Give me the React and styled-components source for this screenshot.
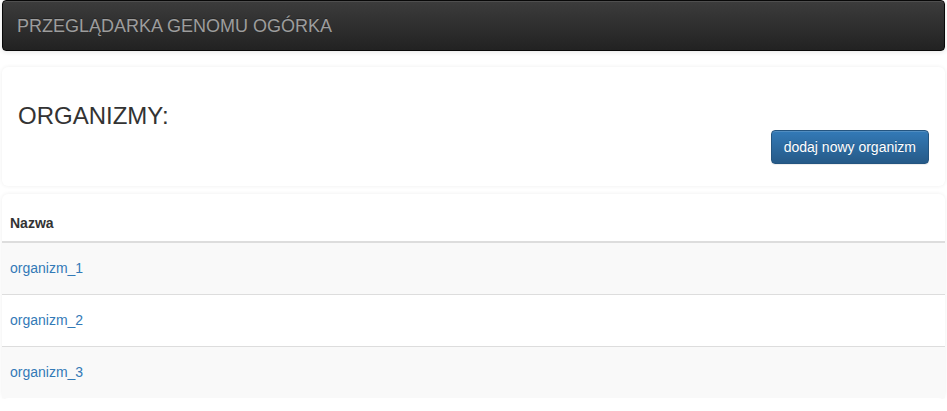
import React from "react";
import styled, { createGlobalStyle } from "styled-components";

const Global = createGlobalStyle`
  html, body { margin: 0; padding: 0; background: #fff; }
  body {
    font-family: "Liberation Sans", Arial, sans-serif;
    font-size: 14px;
    line-height: 20px;
    color: #333;
  }
  * { box-sizing: border-box; }
`;

const Page = styled.div`
  padding: 0 2px;
`;

const Navbar = styled.nav`
  height: 51px;
  display: flex;
  align-items: center;
  background: linear-gradient(to bottom, #3c3c3c 0%, #222 100%);
  border: 1px solid #080808;
  border-radius: 4px;
  box-shadow: inset 0 1px 0 rgba(255, 255, 255, 0.1), 0 1px 5px rgba(0, 0, 0, 0.1);
  margin-bottom: 16px;
`;

const Brand = styled.a`
  padding: 0 14px;
  font-size: 18px;
  line-height: 20px;
  color: #9d9d9d;
  text-decoration: none;
  text-shadow: 0 -1px 0 rgba(0, 0, 0, 0.25);
`;

const Panel = styled.section`
  background: #fff;
  border-radius: 6px;
  box-shadow: 0 0 4px rgba(0, 0, 0, 0.07);
  padding: ${(p) => p.$pad || "0"};
  margin-bottom: ${(p) => p.$mb || "0"};
`;

const HeaderPanel = styled(Panel)`
  display: flex;
  flex-direction: column;
`;

const Title = styled.h3`
  margin: 22px 0 0 0;
  font-size: 24px;
  font-weight: 400;
  line-height: 26px;
  color: #333;
`;

const Actions = styled.div`
  display: flex;
  justify-content: flex-end;
  margin-top: 1px;
`;

const Button = styled.button`
  height: 34px;
  padding: 6px 12px;
  font-family: inherit;
  font-size: 14px;
  line-height: 20px;
  color: #fff;
  background: linear-gradient(to bottom, #337ab7 0%, #265a88 100%);
  border: 1px solid #245580;
  border-radius: 4px;
  text-shadow: 0 -1px 0 rgba(0, 0, 0, 0.2);
  box-shadow: inset 0 1px 0 rgba(255, 255, 255, 0.15), 0 1px 1px rgba(0, 0, 0, 0.075);
  cursor: pointer;
`;

const Table = styled.table`
  width: 100%;
  border-collapse: collapse;
  border-spacing: 0;
`;

const Th = styled.th`
  text-align: left;
  font-weight: 700;
  padding: 19px 8px 8px;
  line-height: 20px;
  border-bottom: 2px solid #ddd;
`;

const Row = styled.tr`
  background: ${(p) => (p.$striped ? "#f9f9f9" : "#fff")};
`;

const Td = styled.td`
  padding: 15px 8px;
  line-height: 21px;
  border-top: 1px solid #ddd;
`;

const Link = styled.a`
  color: #337ab7;
  text-decoration: none;
`;

const organisms = ["organizm_1", "organizm_2", "organizm_3"];

export default function App() {
  return (
    <>
      <Global />
      <Page>
        <Navbar>
          <Brand href="#">PRZEGLĄDARKA GENOMU OGÓRKA</Brand>
        </Navbar>
        <HeaderPanel $pad="14px 16px 22px 16px" $mb="8px">
          <Title>ORGANIZMY:</Title>
          <Actions>
            <Button>dodaj nowy organizm</Button>
          </Actions>
        </HeaderPanel>
        <Panel $pad="0 0 1px 0">
          <Table>
            <thead>
              <tr>
                <Th>Nazwa</Th>
              </tr>
            </thead>
            <tbody>
              {organisms.map((o, i) => (
                <Row key={o} $striped={i % 2 === 0}>
                  <Td>
                    <Link href="#">{o}</Link>
                  </Td>
                </Row>
              ))}
            </tbody>
          </Table>
        </Panel>
      </Page>
    </>
  );
}
